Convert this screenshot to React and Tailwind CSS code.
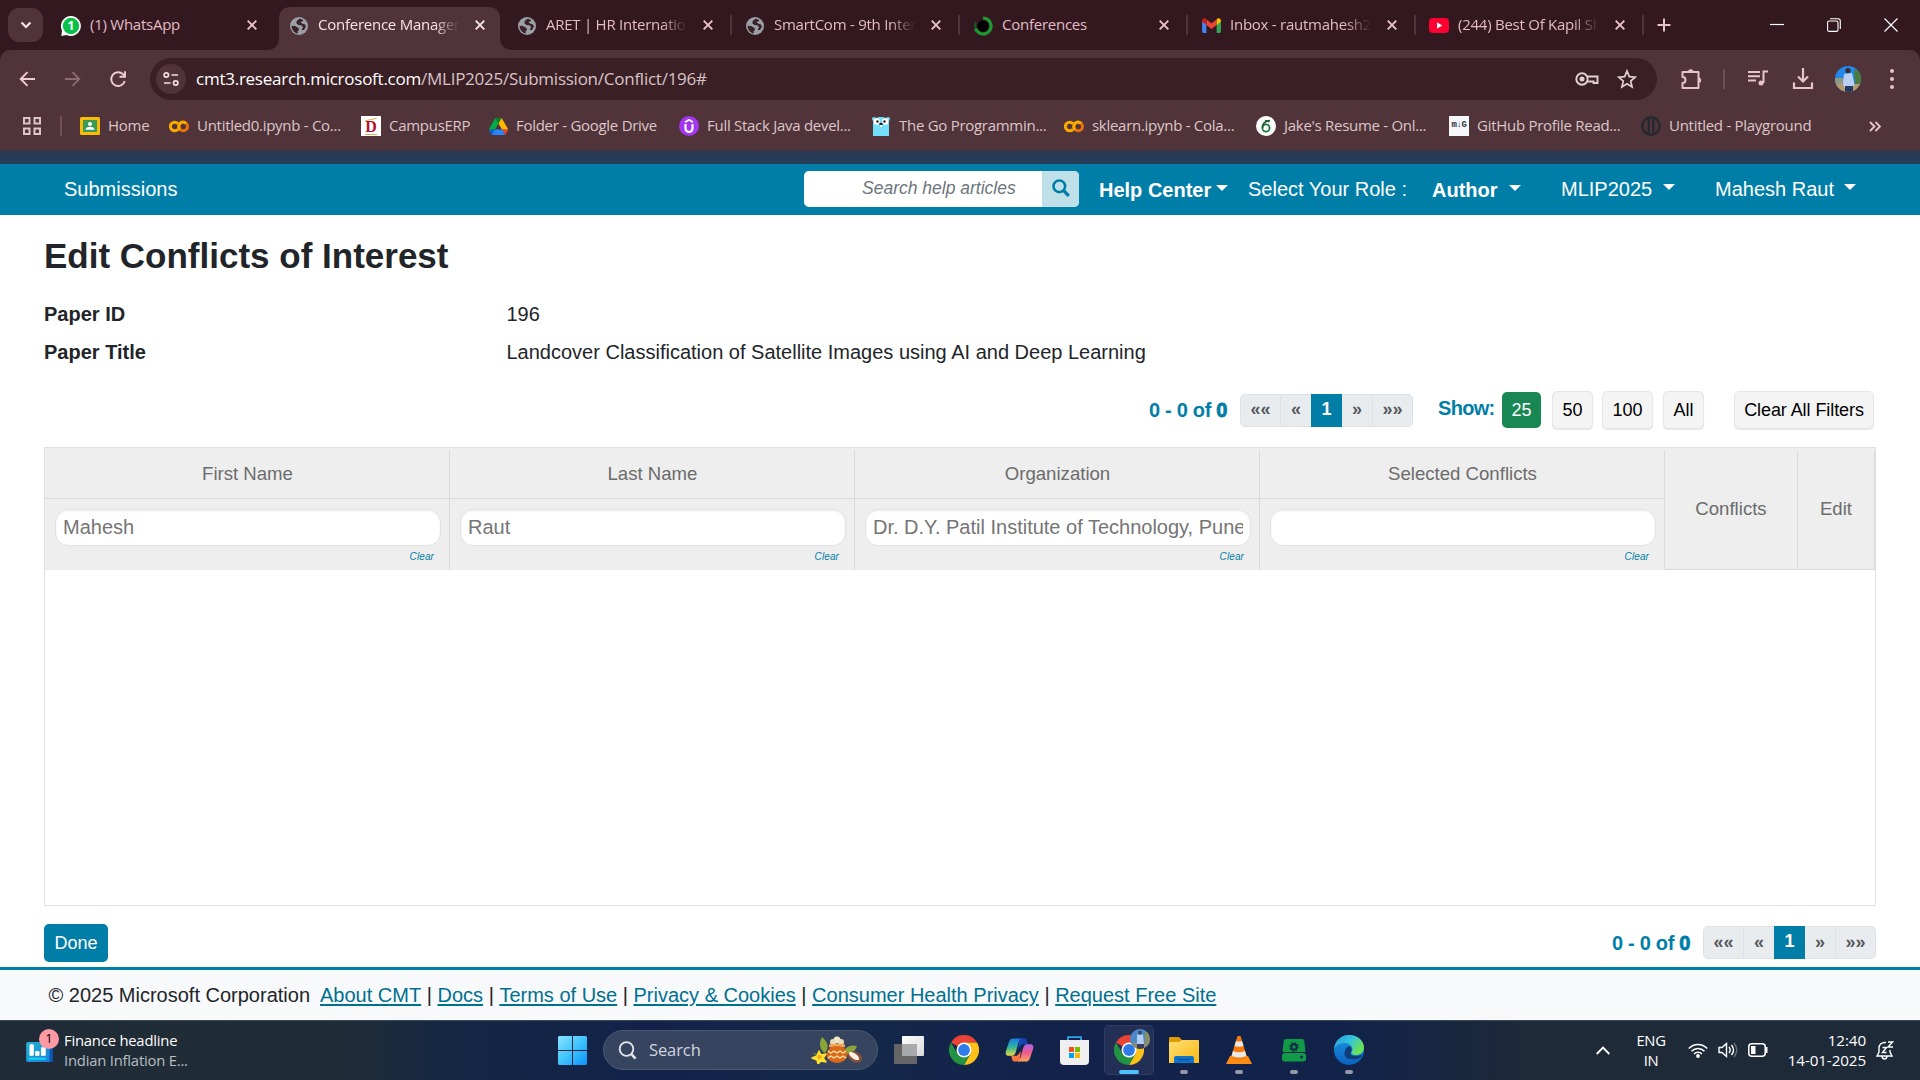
import React from "react";

const seg = "font-['Open_Sans','Noto_Sans',sans-serif]";

function Globe() {
  return (
    <svg viewBox="0 0 18 18" className="h-[18px] w-[18px]">
      <circle cx="9" cy="9" r="9" fill="#9aa0a6" />
      <path d="M9.500 1.800C7.500 3 6 4.500 6.500 6.500L8.500 8l3.500.5 1 2-1.500 2.500h2.500l2-3.500-1-2-3-1-1.500-1.500 2.500-1V2.800ZM1.600 8.800 5 9l3.500 2 .5 2-1.500 1.500.5 2C4.500 16.200 1.600 13 1.600 8.800Z" fill="#3a2227" />
    </svg>
  );
}

function WhatsApp() {
  return (
    <svg viewBox="0 0 20 20" className="h-[20px] w-[20px]">
      <path d="M10 0a10 10 0 1 1-4.500 19L.3 19.900 1 14.500A10 10 0 0 1 10 0Z" fill="#fff" />
      <circle cx="10" cy="10" r="8.200" fill="#0bc04a" />
      <text x="10" y="14.200" textAnchor="middle" fontSize="12" fontWeight="700" fill="#fff" fontFamily="Open Sans">1</text>
    </svg>
  );
}

function Ring() {
  return (
    <svg viewBox="0 0 20 20" className="h-5 w-5">
      <circle cx="10" cy="10" r="5.500" fill="#000" />
      <path d="M10 2a8 8 0 1 1-7.500 10.500" fill="none" stroke="#1f9a33" strokeWidth="3.200" />
      <path d="M2.500 12.500A8 8 0 0 1 3 6" fill="none" stroke="#155a25" strokeWidth="2" />
    </svg>
  );
}

function Gmail() {
  return (
    <svg viewBox="0 0 20 16" className="h-[15px] w-[19px]">
      <path d="M0 3v11.500C0 15.300.700 16 1.500 16H4.500V6Z" fill="#4285f4" />
      <path d="M20 3v11.500c0 .800-.700 1.500-1.500 1.500H15.500V6Z" fill="#34a853" />
      <path d="M4.500 1.500v6L10 11.600l5.500-4.100v-6L10 5.600Z" fill="#ea4335" />
      <path d="M0 2.500C0 .5 2.500-.8 4.500 1v6.500L0 4Z" fill="#c5221f" />
      <path d="M20 2.500c0-2-2.500-3.300-4.500-1.500v6.500L20 4Z" fill="#fbbc04" />
    </svg>
  );
}

function YouTube() {
  return (
    <svg viewBox="0 0 20 15" className="h-[15px] w-[20px]">
      <rect width="20" height="15" rx="4" fill="#ff0033" />
      <path d="M8 4.300v6.400l5.200-3.200Z" fill="#fff" />
    </svg>
  );
}

function Cross({ color = "#e8c3cb" }) {
  return (
    <svg viewBox="0 0 10 10" className="h-[10px] w-[10px]">
      <path d="M.7.7 9.300 9.300M9.300.7.7 9.300" stroke={color} strokeWidth="1.900" />
    </svg>
  );
}

const fade = "[mask-image:linear-gradient(to_right,black_82%,transparent)]";

const tabs = [
  { icon: <WhatsApp />, text: "(1) WhatsApp" },
  { icon: <Globe />, text: "Conference Managem", active: true, long: true },
  { icon: <Globe />, text: "ARET | HR Internation", long: true },
  { icon: <Globe />, text: "SmartCom - 9th Inter", sep: true, long: true },
  { icon: <Ring />, text: "Conferences", sep: true },
  { icon: <Gmail />, text: "Inbox - rautmahesh2", sep: true, long: true },
  { icon: <YouTube />, text: "(244) Best Of Kapil Sh", sep: true, long: true },
];

function Tab({ icon, text, active, sep, long }) {
  return (
    <div className={"relative flex h-[43px] w-[228px] shrink-0 items-center pl-[15px] " + (active ? "text-[#f6e4e8]" : "text-[#e3bcc5]")}>
      {active && (
        <svg viewBox="0 0 246 43" className="absolute -left-[7px] top-0 h-[43px] w-[246px]">
          <path d="M0 43C8 43 12 38 12 31V12C12 4 17 0 24 0H221C229 0 233 4 233 12V31C233 38 238 43 246 43Z" fill="#513439" />
        </svg>
      )}
      {sep && <span className="absolute left-0 top-[8px] h-[20px] w-[2px] bg-[#513439]" />}
      <span className="relative flex w-5 -translate-y-[3px] justify-center">{icon}</span>
      <span className={"relative ml-[9px] w-[141px] -translate-y-[4px] overflow-hidden whitespace-nowrap text-[15px] tracking-[-0.250px] " + (long ? fade : "")}>{text}</span>
      <span className="relative ml-[16px] -translate-y-[4px]"><Cross color={active ? "#f6e4e8" : "#e8c3cb"} /></span>
    </div>
  );
}

function Colab() {
  return (
    <svg viewBox="0 0 20 12" className="h-[13px] w-[20px]" fill="none" strokeWidth="3">
      <path d="M9 3.300A4.300 4.300 0 1 0 9 8.700" stroke="#f9ab00" />
      <circle cx="14.200" cy="6" r="4.300" stroke="#e8710a" />
      <path d="M11 9A4.300 4.300 0 0 1 17 2.800" stroke="#f9ab00" />
    </svg>
  );
}

const bookmarks = [
  {
    w: "w-[89px]", text: "Home",
    icon: (
      <svg viewBox="0 0 20 18" className="h-[18px] w-[20px]">
        <rect width="20" height="18" rx="1.500" fill="#f9bc05" />
        <rect x="3" y="3" width="14" height="12" fill="#3c9a58" />
        <circle cx="10" cy="7" r="2" fill="#fff" />
        <path d="M5.500 12.800c0-4 9-4 9 0Z" fill="#fff" />
      </svg>
    ),
  },
  { w: "w-[192px]", text: "Untitled0.ipynb - Co...", icon: <Colab /> },
  {
    w: "w-[127px]", text: "CampusERP",
    icon: (
      <span className="relative flex h-5 w-5 items-center justify-center bg-white font-['Liberation_Serif',serif] text-[16px] font-bold leading-none text-[#b3122a]">
        <span className="translate-y-[1px]">D</span>
        <span className="absolute left-[4px] top-[3px] h-[1px] w-[12px] -rotate-12 bg-[#d8b15a]" />
        <span className="absolute bottom-[1px] left-[4px] h-[1px] w-[12px] bg-[#d8b15a]" />
      </span>
    ),
  },
  {
    w: "w-[191px]", text: "Folder - Google Drive",
    icon: (
      <svg viewBox="0 0 87.300 78" className="h-[17px] w-[19px]">
        <path d="m6.600 66.850 3.850 6.650c.8 1.400 1.950 2.500 3.300 3.300l13.750-23.800h-27.500c0 1.550.4 3.100 1.200 4.500z" fill="#0066da" />
        <path d="m43.650 25-13.750-23.800c-1.350.8-2.500 1.900-3.300 3.300l-25.400 44a9.060 9.060 0 0 0 -1.200 4.500h27.500z" fill="#00ac47" />
        <path d="m73.550 76.800c1.350-.8 2.500-1.900 3.300-3.300l1.600-2.750 7.650-13.250c.8-1.400 1.200-2.950 1.200-4.500h-27.500l5.850 11.500z" fill="#ea4335" />
        <path d="m43.650 25 13.750-23.800c-1.350-.8-2.900-1.200-4.500-1.200h-18.500c-1.600 0-3.150.45-4.500 1.200z" fill="#00832d" />
        <path d="m59.800 53h-32.300l-13.750 23.800c1.350.8 2.900 1.200 4.500 1.200h50.800c1.600 0 3.150-.45 4.500-1.200z" fill="#2684fc" />
        <path d="m73.400 26.500-12.700-22c-.8-1.400-1.950-2.500-3.300-3.300l-13.750 23.800 16.150 28h27.450c0-1.550-.4-3.100-1.200-4.500z" fill="#ffba00" />
      </svg>
    ),
  },
  {
    w: "w-[192px]", text: "Full Stack Java devel...",
    icon: (
      <svg viewBox="0 0 20 20" className="h-5 w-5" fill="none" stroke="#fff">
        <circle cx="10" cy="10" r="10" fill="#a435f0" stroke="none" />
        <path d="M6.500 8v4.500a3.500 3.500 0 0 0 7 0V8" strokeWidth="2.200" />
        <path d="M6 6.200 10 3.800l4 2.400" strokeWidth="1.800" />
      </svg>
    ),
  },
  {
    w: "w-[193px]", text: "The Go Programmin...",
    icon: (
      <svg viewBox="0 0 20 20" className="h-5 w-5">
        <path d="M2 20V8C2 3 5 1 10 1s8 2 8 7v12Z" fill="#74dffc" />
        <circle cx="3" cy="3" r="2" fill="#74dffc" /><circle cx="17" cy="3" r="2" fill="#74dffc" />
        <circle cx="5.700" cy="5.500" r="3.200" fill="#fff" /><circle cx="14.300" cy="5.500" r="3.200" fill="#fff" />
        <circle cx="6.500" cy="5.500" r="1.200" fill="#222" /><circle cx="13.500" cy="5.500" r="1.200" fill="#222" />
        <ellipse cx="10" cy="8" rx="1.800" ry="1.200" fill="#222" /><path d="M9 9h2v2H9z" fill="#fff" />
      </svg>
    ),
  },
  { w: "w-[192px]", text: "sklearn.ipynb - Cola...", icon: <Colab /> },
  {
    w: "w-[193px]", text: "Jake's Resume - Onl...",
    icon: (
      <svg viewBox="0 0 20 20" className="h-5 w-5">
        <circle cx="10" cy="10" r="10" fill="#fff" />
        <circle cx="10" cy="12" r="3.600" fill="none" stroke="#1b7a34" strokeWidth="1.800" />
        <path d="M6.500 12C6 8 9 5 14 4.500M9 4.500l4.500 1.300" fill="none" stroke="#1c5c33" strokeWidth="1.600" />
      </svg>
    ),
  },
  {
    w: "w-[192px]", text: "GitHub Profile Read...",
    icon: <span className="flex h-5 w-5 items-center justify-center bg-[#f5f7fb] font-['Liberation_Mono',monospace] text-[9px] font-bold tracking-[-0.400px] text-[#2b3137]">m↓G</span>,
  },
  {
    w: "w-[190px]", text: "Untitled - Playground",
    icon: (
      <svg viewBox="0 0 20 20" className="h-5 w-5" stroke="#24292e" fill="none">
        <circle cx="10" cy="10" r="8.700" strokeWidth="2.600" />
        <path d="M7.700 2v16M12.300 2v16" strokeWidth="2.200" />
      </svg>
    ),
  },
];

function Browser() {
  return (
    <header className={"flex h-[151px] flex-col bg-[#331820] " + seg}>
      <div className="flex h-[50px] shrink-0 items-end">
        <div className="mb-[8px] ml-[8px] flex h-[34px] w-[35px] items-center justify-center rounded-[11px] bg-[#513439]">
          <svg viewBox="0 0 12 8" className="h-[8px] w-[12px]"><path d="m1.500 1.500 4.500 4.500 4.500-4.500" fill="none" stroke="#f6e4e8" strokeWidth="2.200" /></svg>
        </div>
        <div className="ml-[3px] flex">
          {tabs.map((t, i) => <Tab key={i} {...t} />)}
          <div className="relative flex h-[43px] w-[40px] items-center">
            <span className="absolute left-0 top-[8px] h-[20px] w-[2px] bg-[#513439]" />
            <svg viewBox="0 0 14 14" className="ml-[15px] h-[14px] w-[14px] -translate-y-[4px]"><path d="M7 .5v13M.5 7h13" stroke="#e8c3cb" strokeWidth="2" /></svg>
          </div>
        </div>
        <div className="ml-auto mr-[22px] flex h-[50px] items-center gap-[43px]">
          <svg viewBox="0 0 14 14" className="h-[14px] w-[14px]"><path d="M0 6.500h14" stroke="#fff" strokeWidth="1.200" /></svg>
          <svg viewBox="0 0 14 14" className="h-[14px] w-[14px]" fill="none" stroke="#fff" strokeWidth="1.100"><rect x=".6" y="3" width="10.400" height="10.400" rx="1.500" /><path d="M3 .7h8c1.400 0 2.300 1 2.300 2.300v8" /></svg>
          <svg viewBox="0 0 14 14" className="h-[14px] w-[14px]"><path d="m.5.5 13 13M13.500.5l-13 13" stroke="#fff" strokeWidth="1.200" /></svg>
        </div>
      </div>
      <div className="flex h-[58px] shrink-0 items-center rounded-t-[10px] bg-[#513439] pl-[17px] pr-[17px]">
        <svg viewBox="0 0 20 20" className="h-5 w-5" fill="none" stroke="#f0cdd4" strokeWidth="1.900"><path d="M18 10H4M10.500 3.200 3.700 10l6.800 6.800" /></svg>
        <svg viewBox="0 0 20 20" className="ml-[25px] h-5 w-5" fill="none" stroke="#8b6a70" strokeWidth="1.900"><path d="M3 10h14M10.500 3.200l6.800 6.800-6.800 6.800" /></svg>
        <svg viewBox="0 0 20 20" className="ml-[26px] h-5 w-5" fill="none" stroke="#f0cdd4" strokeWidth="1.900"><path d="M16.800 12A6.900 6.900 0 1 1 15 5.200L17 7.500" /><path d="M17 2.300v5.500h-5.500" /></svg>
        <div className="ml-[22px] flex h-[42px] w-[1507px] items-center rounded-full bg-[#3a2025] pl-[6px]">
          <span className="flex h-[30px] w-[30px] items-center justify-center rounded-full bg-[#513439]">
            <svg viewBox="0 0 16 16" className="h-4 w-4" fill="none" stroke="#f1dfe2" strokeWidth="1.700"><circle cx="3.300" cy="4" r="2.200" /><path d="M8.500 4H15M1 12h6.500" /><circle cx="12.700" cy="12" r="2.200" /></svg>
          </span>
          <span className="ml-[10px] whitespace-nowrap text-[17px] tracking-[-0.250px] text-[#d9c3c7]"><span className="text-white">cmt3.research.microsoft.com</span>/MLIP2025/Submission/Conflict/196#</span>
          <svg viewBox="0 0 24 14" className="ml-auto h-[14px] w-[24px]" fill="none" stroke="#e3d0d3" strokeWidth="1.900"><circle cx="7" cy="7" r="5.700" /><circle cx="7" cy="7" r="2.500" fill="#e3d0d3" stroke="none" /><path d="M12.500 4.500H22.500v6.500h-4V9.500h-6" /></svg>
          <svg viewBox="0 0 20 20" className="ml-[18px] mr-[20px] h-5 w-5" fill="none" stroke="#e3d0d3" strokeWidth="1.700"><path d="m10 2 2.300 5.600 6 .5-4.600 4 1.400 5.900-5.100-3.200L4.900 18l1.400-5.900-4.600-4 6-.5Z" /></svg>
        </div>
        <svg viewBox="0 0 22 22" className="ml-[23px] h-[22px] w-[22px]" fill="none" stroke="#e8c3cb" strokeWidth="2"><path d="M2.500 4h16v16h-16v-5c4 0 4-6 0-6Z" strokeLinejoin="round" /><path d="M8 4a2.700 2.700 0 0 1 5.400 0ZM18.500 9.500a2.700 2.700 0 0 1 0 5.400Z" fill="#e8c3cb" stroke="none" /></svg>
        <span className="ml-[21px] h-[20px] w-[2px] bg-[#705056]" />
        <svg viewBox="0 0 20 16" className="ml-[23px] h-[16px] w-[20px] -translate-y-[1px]" fill="none" stroke="#e8c3cb" strokeWidth="2"><path d="M0 2h12M0 6.300h12M0 10.500h8M15.500 13V1.500H20" /><circle cx="13" cy="13" r="2.500" fill="#e8c3cb" stroke="none" /></svg>
        <svg viewBox="0 0 22 22" className="ml-[24px] h-[22px] w-[22px]" fill="none" stroke="#e8c3cb" strokeWidth="2.200"><path d="M11 0v13M6 8.500l5 5 5-5M2 14.500V20h18v-5.500" /></svg>
        <svg viewBox="0 0 26 26" className="ml-[21px] h-[26px] w-[26px]"><defs><clipPath id="av"><circle cx="13" cy="13" r="13" /></clipPath></defs><g clipPath="url(#av)"><path fill="#2488e8" d="M0 0h26v26H0z" /><path fill="#8d9a8a" d="M0 12h10v9H0z" /><path fill="#4c7a3c" d="M19 3l7 4v11h-6z" /><path fill="#b09a6e" d="M0 18h26v8H0z" /><path d="m9 8 8-1 2.500 12-3 3H9.500L8 18Z" fill="#b9cff5" /><path d="M10 20h8v6h-8z" fill="#27375e" /><circle cx="13" cy="4.500" r="2.600" fill="#3b2730" /></g></svg>
        <svg viewBox="0 0 6 22" className="ml-[28px] h-[22px] w-[6px]" fill="#e8c3cb"><circle cx="3" cy="3" r="2" /><circle cx="3" cy="11" r="2" /><circle cx="3" cy="19" r="2" /></svg>
      </div>
      <div className="flex flex-1 items-start bg-[#513439] pl-[23px] text-[15px] text-[#dcc6ca]">
        <div className="flex h-[36px] w-full items-center">
          <svg viewBox="0 0 18 18" className="h-[18px] w-[18px]" fill="none" stroke="#dcc6ca" strokeWidth="2"><path d="M1 1h5.500v5.500H1zM11.500 1H17v5.500h-5.500zM1 11.500h5.500V17H1zM11.500 11.500H17V17h-5.500z" /></svg>
          <span className="ml-[19px] h-[20px] w-[2px] bg-[#705056]" />
          <div className="ml-[18px] flex">
            {bookmarks.map((b) => (
              <span key={b.text} className={"flex items-center whitespace-nowrap tracking-[-0.280px] " + b.w}>
                <span className="mr-[8px] flex w-5 shrink-0 justify-center">{b.icon}</span><span className="-translate-y-[1px]">{b.text}</span>
              </span>
            ))}
          </div>
          <svg viewBox="0 0 12 10" className="ml-[38px] h-[11px] w-[12px]" fill="none" stroke="#e8c3cb" strokeWidth="1.900"><path d="m1 .5 4.500 4.500L1 9.500M6.500.5 11 5 6.500 9.500" /></svg>
        </div>
      </div>
    </header>
  );
}

function Caret({ className }) {
  return <svg viewBox="0 0 12 6" className={"h-[6px] w-[12px] " + className}><path d="M0 0h12L6 6Z" fill="#fff" /></svg>;
}

function Pager() {
  const cell = "flex items-center justify-center border-[#dee2e6] bg-[#e9ecef] text-[#55595c] pb-[1px]";
  return (
    <div className="flex items-center">
      <span className="mr-[13px] w-[78px] whitespace-nowrap text-[20px] font-bold tracking-[-0.300px] text-[#007ea7]">0 - 0 of <span className="[-webkit-text-stroke:0.800px_#007ea7]">0</span></span>
      <div className="flex h-[33px] text-[18px] font-bold">
        <span className={cell + " w-[41px] rounded-l-[5px] border"}>««</span>
        <span className={cell + " w-[30px] border-y"}>«</span>
        <span className="flex w-[31px] items-center justify-center bg-[#007ea7] pb-[2px] text-white">1</span>
        <span className={cell + " w-[31px] border-y border-r"}>»</span>
        <span className={cell + " w-[40px] rounded-r-[5px] border-y border-r"}>»»</span>
      </div>
    </div>
  );
}

function SizeButton({ children, className }) {
  return <span className={"flex h-[38px] items-center justify-center rounded-[5px] border border-[#e6e6e6] bg-[#f4f4f4] text-[18px] text-black shadow-[0_1px_1px_rgba(0,0,0,0.100)] " + className}>{children}</span>;
}

const columns = [
  ["First Name", "Mahesh"],
  ["Last Name", "Raut"],
  ["Organization", "Dr. D.Y. Patil Institute of Technology, Pune"],
  ["Selected Conflicts", ""],
];

function Page() {
  return (
    <main className="flex h-[869px] flex-col bg-white font-['Liberation_Sans',Arial,sans-serif] text-[20px] text-[#212529]">
      <div className="h-[13px] shrink-0 bg-[#263c58]" />
      <nav className="flex h-[51px] shrink-0 items-center bg-[#007ea7] pb-[2px] pl-[64px] text-white">
        <span className="w-[740px]">Submissions</span>
        <div className="flex h-[36px] w-[275px] overflow-hidden rounded-[5px] bg-white">
          <span className="flex w-[238px] items-center pl-[58px] text-[17.500px] italic text-[#6c757d]">Search help articles</span>
          <span className="flex w-[37px] items-center justify-center bg-[#bfdfe9]">
            <svg viewBox="0 0 18 18" className="h-[18px] w-[18px] -translate-y-[1px]" fill="none" stroke="#007ea7"><circle cx="7.300" cy="7.300" r="5.800" strokeWidth="2.600" /><path d="m11.500 11.500 5.300 5.300" strokeWidth="3.200" /></svg>
          </span>
        </div>
        <span className="ml-[20px] w-[117px] translate-y-[1px] whitespace-nowrap font-bold">Help Center</span><Caret className="-translate-y-[1px]" />
        <span className="ml-[20px] w-[184px] whitespace-nowrap">Select Your Role :</span>
        <span className="w-[77px] translate-y-[1px] font-bold">Author</span><Caret className="-translate-y-[1px]" />
        <span className="ml-[40px] w-[102px]">MLIP2025</span><Caret className="-translate-y-[2px]" />
        <span className="ml-[40px] w-[129px] whitespace-nowrap">Mahesh Raut</span><Caret className="-translate-y-[2px]" />
      </nav>
      <section className="flex flex-1 flex-col px-[44px]">
        <h1 className="mt-[19px] text-[35px] font-bold leading-[44px]">Edit Conflicts of Interest</h1>
        <div className="mt-[21px] grid grid-cols-[462.5px_1fr] gap-y-[8px] leading-[30px]">
          <b>Paper ID</b><span>196</span>
          <b>Paper Title</b><span>Landcover Classification of Satellite Images using AI and Deep Learning</span>
        </div>
        <div className="mt-[24px] flex h-[38px] items-center justify-end pr-[2px]">
          <Pager />
          <span className="ml-[25px] w-[64px] pb-[4px] text-[20px] font-bold tracking-[-0.700px] text-[#007ea7]">Show:</span>
          <span className="flex h-[36px] w-[39px] items-center justify-center rounded-[5px] bg-[#198754] text-[18px] text-white">25</span>
          <SizeButton className="ml-[11px] w-[41px]">50</SizeButton>
          <SizeButton className="ml-[9px] w-[51px]">100</SizeButton>
          <SizeButton className="ml-[10px] w-[41px]">All</SizeButton>
          <SizeButton className="ml-[30px] w-[140px] whitespace-nowrap tracking-[-0.080px]">Clear All Filters</SizeButton>
        </div>
        <div className="mt-[18px] h-[459px] border border-[#dee2e6]">
          <div className="flex h-[122px] bg-[#eeeeee] pt-[2px] text-[18.600px] text-[#6c6c6c]">
            {columns.map(([name, value]) => (
              <div key={name} className="flex w-[405px] flex-col border-r border-[#dadada]">
                <div className="flex h-[49px] items-center justify-center border-b border-[#dadada] pb-[1px] pl-[1px]">{name}</div>
                <div className="flex flex-col items-end pl-[10px] pr-[8px] pt-[10px]">
                  <div className="flex h-[37px] w-full items-center overflow-hidden rounded-[13px] border border-[#dfe3e7] bg-white px-[7px] pb-[2px] text-[20px] text-[#757575] shadow-[inset_0_1px_2px_rgba(0,0,0,0.080)]">
                    <span className="flex-1 overflow-hidden whitespace-nowrap">{value}</span>
                  </div>
                  <span className="mr-[7px] mt-[4px] text-[10px] italic leading-[13px] tracking-[0.100px] text-[#007ea7]">Clear</span>
                </div>
              </div>
            ))}
            <div className="flex w-[133px] items-center justify-center border-b border-r border-[#dadada] pb-[1px]">Conflicts</div>
            <div className="flex flex-1 items-center justify-center border-b border-r border-[#dadada] pb-[1px]">Edit</div>
          </div>
        </div>
        <div className="mt-[18px] flex items-start justify-between">
          <span className="flex h-[38px] w-[64px] items-center justify-center rounded-[5px] bg-[#007ea7] text-[18px] text-white">Done</span>
          <div className="mt-[2px]"><Pager /></div>
        </div>
      </section>
      <footer className="flex h-[53px] shrink-0 items-center whitespace-pre border-t-[3px] border-[#007ea7] bg-[#f8f9fb] pl-[48.5px]">
        <span className="mr-[10px]">© 2025 Microsoft Corporation</span>
        {["About CMT", "Docs", "Terms of Use", "Privacy & Cookies", "Consumer Health Privacy", "Request Free Site"].map((t, i) => (
          <React.Fragment key={t}>{i > 0 && <span> | </span>}<a className="text-[#00708f] underline underline-offset-[2px]">{t}</a></React.Fragment>
        ))}
      </footer>
    </main>
  );
}

function Chrome() {
  return (
    <svg viewBox="0 0 30 30" className="h-[30px] w-[30px]">
      <path d="M15 15 2 7.500A15 15 0 0 1 28 7.500H15Z" fill="#ea4335" />
      <path d="M28 7.500A15 15 0 0 1 15 30L21.500 18.500 15 7.500Z" fill="#fbc116" />
      <path d="M15 30A15 15 0 0 1 2 7.500L8.500 18.700 21.500 18.700Z" fill="#229342" />
      <circle cx="15" cy="15" r="7.500" fill="#fff" /><circle cx="15" cy="15" r="5.900" fill="#2f7bea" />
    </svg>
  );
}

function Copilot() {
  return (
    <svg viewBox="0 0 30 26" className="h-[26px] w-[29px]">
      <defs>
        <linearGradient id="ca" x1="0" y1="0" x2="0" y2="1"><stop offset="0" stopColor="#1b78e6" /><stop offset=".5" stopColor="#2fb59c" /><stop offset="1" stopColor="#e8d840" /></linearGradient>
        <linearGradient id="cb" x1="0" y1="0" x2="0" y2="1"><stop offset="0" stopColor="#b065e8" /><stop offset=".5" stopColor="#f0598c" /><stop offset="1" stopColor="#fba85a" /></linearGradient>
      </defs>
      <path d="M15 1h5c2.500 0 2.500 2 3.500 6h-6l-4 5Z" fill="#1447b5" />
      <path d="M15 25h-5c-2.500 0-2.500-2-3.500-6h6l4-5Z" fill="#f7763d" />
      <path d="M18 1c-2 0-3 1-4 4l-2.500 9c-.8 3-2 5-4.500 5H4c-3 0-4-2-3-5L4 5c1-3 2-4 5-4Z" fill="url(#ca)" />
      <path d="M12 25c2 0 3-1 4-4l2.500-9c.8-3 2-5 4.500-5h3c3 0 4 2 3 5l-3 9c-1 3-2 4-5 4Z" fill="url(#cb)" />
    </svg>
  );
}

function TaskIcon({ children, open, current }) {
  return (
    <div className={"relative flex h-[50px] w-[50px] items-center justify-center " + (current ? "rounded-[5px] border border-[#303c62] bg-[#242f56]" : "")}>
      {children}
      {open && <span className={"absolute h-[4px] rounded-full " + (current ? "bottom-0 w-[20px] bg-[#4cc2ff]" : "bottom-[1px] w-[8px] bg-[#9499aa]")} />}
    </div>
  );
}

function Taskbar() {
  return (
    <footer className={"flex h-[60px] items-center border-t border-[#3d4956] bg-[linear-gradient(90deg,#1f2b36_0%,#202c35_17%,#142744_24%,#12224a_34%,#142949_43%,#12224b_55%,#12234a_70%,#1e2a38_80%,#1e2a37_100%)] pb-[1px] text-white " + seg}>
      <div className="flex w-[558px] items-center pl-[26px]">
        <div className="relative h-[36px] w-[34px]">
          <svg viewBox="0 0 28 22" className="absolute left-0 top-[10px] h-[21px] w-[27px]"><defs><linearGradient id="fi" x2="1" y2="1"><stop stopColor="#20b4cf" /><stop offset="1" stopColor="#1d7ddc" /></linearGradient></defs><rect x="4" y="1" width="24" height="20" rx="2" fill="#0c56b6" /><rect width="24.500" height="21" rx="2" fill="url(#fi)" /><path d="M4 3h3.500v11H4zM10 10h3.500v4H10zM16 6h4v8h-4z" fill="#fff" stroke="#fff" /><path d="M3 17.500h18" stroke="#11dcf6" strokeWidth="2" /></svg>
          <span className="absolute left-[13px] top-[-3px] flex h-5 w-5 items-center justify-center rounded-full bg-[#ff99a4] text-[13px] text-black">1</span>
        </div>
        <div className="ml-[4px] flex flex-col text-[14.800px] leading-[20px] tracking-[-0.200px]"><span>Finance headline</span><span className="text-[#b9bec3]">Indian Inflation E...</span></div>
      </div>
      <svg viewBox="0 0 29 29" className="h-[29px] w-[29px]"><defs><linearGradient id="wn" x2="1" y2="1"><stop stopColor="#8ae4ff" /><stop offset=".5" stopColor="#3fc4fc" /><stop offset="1" stopColor="#0a93f8" /></linearGradient></defs><path d="M1 0h13v14H0V1ZM15 0h13l1 1v13H15ZM0 15h14v14H1l-1-1ZM15 15h14v13l-1 1H15Z" fill="url(#wn)" /></svg>
      <div className="ml-[16px] flex h-[40px] w-[275px] items-center rounded-full border border-[#4a5875] bg-[#36445f] pl-[14px] text-[16.500px] tracking-[-0.100px] text-[#cfd5df]">
        <svg viewBox="0 0 19 19" className="h-[19px] w-[19px]" fill="none" stroke="#e3e6ec"><circle cx="8.500" cy="8" r="6.800" strokeWidth="1.800" /><path d="m13.300 13 4.200 4.700" strokeWidth="2.600" /></svg>
        <span className="ml-[12px]">Search</span>
        <svg viewBox="0 0 52 28" className="ml-auto mr-[15px] h-[28px] w-[52px]">
          <path d="M12 1c7 6 7 11 3 16-6-4-6-10-3-16ZM47 10c-8-2-13 2-14 8 7 1 12-2 14-8Z" fill="#8aa638" /><path d="M2 17l14 2-2 4Z" fill="#7a9632" />
          <circle cx="27" cy="4" r="3.500" fill="#f3e8c8" /><circle cx="23" cy="6" r="3" fill="#eadcb5" /><circle cx="31" cy="6" r="3" fill="#eadcb5" />
          <rect x="19" y="8" width="16" height="3.500" rx="1.500" fill="#f4a455" /><ellipse cx="27" cy="18.500" rx="10.500" ry="8.500" fill="#d9691a" />
          <path d="m18 15 3 2 3-2 3 2 3-2 3 2 3-2M18 22l3-2 3 2 3-2 3 2 3-2 3 2" fill="none" stroke="#ffe9aa" strokeWidth="1.200" />
          <ellipse cx="45" cy="21" rx="7.500" ry="5" transform="rotate(28 45 21)" fill="#87503b" /><ellipse cx="44" cy="20" rx="6" ry="2.600" transform="rotate(35 44 20)" fill="#fff3e6" />
          <path d="m9 15 2 4 5-1-3 4 3 4-5-1-3 3-1-4-5-2 5-2Z" fill="#ffe02d" stroke="#ffe02d" strokeWidth="1.500" strokeLinejoin="round" /><circle cx="9.500" cy="21" r="2" fill="#f2a31a" />
        </svg>
      </div>
      <div className="ml-[6px] flex gap-[5px]">
        <TaskIcon><svg viewBox="0 0 30 28" className="h-[28px] w-[30px]"><defs><linearGradient id="tv" x2="1" y2="1"><stop stopColor="#fff" /><stop offset="1" stopColor="#d9d9d9" /></linearGradient></defs><rect y="8" width="23" height="20" rx="1" fill="#656565" /><rect x="8" width="22" height="20" rx="1" fill="url(#tv)" /><path d="M8 8h15v12H8z" fill="#a7a9ab" /></svg></TaskIcon>
        <TaskIcon><Chrome /></TaskIcon>
        <TaskIcon><Copilot /></TaskIcon>
        <TaskIcon><svg viewBox="0 0 29 29" className="h-[29px] w-[29px]"><path d="M8 5V1.200h13V5" fill="none" stroke="#28a8ea" strokeWidth="1.800" /><path d="M0 4h29v21q0 4-4 4H4q-4 0-4-4Z" fill="#efefef" /><path d="M9 11h5v5H9z" fill="#f25022" /><path d="M15 11h5v5h-5z" fill="#7fba00" /><path d="M9 17h5v5H9z" fill="#00a4ef" /><path d="M15 17h5v5h-5z" fill="#ffb900" /></svg></TaskIcon>
        <TaskIcon open current><Chrome /><svg viewBox="0 0 20 20" className="absolute right-[3px] top-[3px] h-5 w-5"><defs><clipPath id="ap"><circle cx="10" cy="10" r="10" /></clipPath></defs><g clipPath="url(#ap)"><path fill="#4b88c8" d="M0 0h20v20H0z" /><path fill="#8a8f5c" d="M15 3h5v11h-5z" /><path fill="#8f8a72" d="M0 14h20v6H0z" /><path fill="#b5cdf5" d="M7 5.500h6l1 9.500H7z" /><path fill="#35415b" d="M7 15h7v5H7zM8.500 2h3v3.500h-3z" /></g></svg></TaskIcon>
        <TaskIcon open><svg viewBox="0 0 30 26" className="h-[26px] w-[30px]"><defs><linearGradient id="fd" x2="1" y2="1"><stop stopColor="#ffdf72" /><stop offset="1" stopColor="#fbb915" /></linearGradient></defs><path d="M0 1q0-1 1-1h9l3 3v4H0Z" fill="#dd9c06" /><path d="M0 6q0-1 1-1h9l3-2h16q1 0 1 1v22H0Z" fill="url(#fd)" /><path d="M5 26v-5q0-2 2-2h16q2 0 2 2v5Z" fill="#0f73c9" /><path d="M9 22.500h12" stroke="#084b92" strokeWidth="1.200" /></svg></TaskIcon>
        <TaskIcon open><svg viewBox="0 0 26 28" className="h-[28px] w-[26px]"><path d="M4 20h18l4 8H0Z" fill="#ff8b12" /><path d="m11.500 0h3L21 21q-8 5-16 0Z" fill="#f47b0b" /><path d="m10 5-1.500 5q4.500 1.600 9 0L16 5q-3 1-6 0ZM7 15l-1.400 5q7.400 3 14.800 0L19 15q-6 2.500-12 0Z" fill="#e9e9e9" /></svg></TaskIcon>
        <TaskIcon open><svg viewBox="0 0 24 23" className="h-[23px] w-[24px]"><path d="M4 0h16q2 0 2.300 2L23.500 13H.5L1.700 2Q2 0 4 0Z" fill="#119b47" /><rect y="14" width="24" height="8.500" rx="3" fill="#119b47" /><circle cx="12" cy="8" r="2.700" fill="none" stroke="#14294a" strokeWidth="2" /><circle cx="12" cy="8" r="4.200" fill="none" stroke="#14294a" strokeWidth="1.200" strokeDasharray="1.650 1.650" /><circle cx="19.500" cy="18" r="1.500" fill="#14294a" /></svg></TaskIcon>
        <TaskIcon open><svg viewBox="0 0 30 30" className="h-[30px] w-[30px]"><defs><linearGradient id="ea" x2="1" y2=".5"><stop stopColor="#269be0" /><stop offset=".55" stopColor="#35c3dd" /><stop offset="1" stopColor="#6be34e" /></linearGradient><linearGradient id="eb" x2="0" y2="1"><stop stopColor="#1995e2" /><stop offset="1" stopColor="#0c62bf" /></linearGradient></defs><circle cx="15" cy="15" r="15" fill="url(#eb)" /><path d="M0 14C1 5 8 0 15 0c9 0 15 6 15 12.500 0 5-4 7.500-8 7.500-4 0-5.500-1.500-4.500-3 1-1.400 1.200-2.500.8-4C17 9 13 7.500 9 8 5 8.500 1.500 11 0 14Z" fill="url(#ea)" /><path d="M10.500 19c0-5 3-8 5-8 2 1 3 4 1.500 6-1.500 3 2 4.500 6 4 3-.3 5-1 5.500-.5-3 5-18 6-18-1.500Z" fill="#103d79" /></svg></TaskIcon>
      </div>
      <div className="ml-auto flex items-center pr-[26px] text-[15px] leading-[20px]">
        <svg viewBox="0 0 14 9" className="h-[9px] w-[14px]" fill="none" stroke="#fff" strokeWidth="1.800"><path d="m.7 8 6.300-6.500L13.300 8" /></svg>
        <div className="ml-[26px] flex w-[30px] flex-col items-center text-[14.800px] tracking-[-0.300px]"><span>ENG</span><span>IN</span></div>
        <svg viewBox="0 0 20 16" className="ml-[22px] h-[16px] w-[20px]" fill="none" stroke="#fff" strokeWidth="1.500"><path d="M.8 6.500a12.500 12.500 0 0 1 18.400 0M3.500 9.200a9 9 0 0 1 13 0M6 11.900a5.500 5.500 0 0 1 8 0" /><circle cx="10" cy="14" r="1.900" fill="#fff" stroke="none" /></svg>
        <svg viewBox="0 0 20 16" className="ml-[10px] h-[16px] w-[20px]" fill="none" stroke="#fff" strokeWidth="1.400"><path d="M1 5.500h3L8.500 1.500v13L4 10.500H1ZM11 5q2.400 3 0 6M13.500 3q4 5 0 10" /><path d="M16 1q5.500 7 0 14" stroke="#66717c" /></svg>
        <svg viewBox="0 0 20 14" className="ml-[10px] h-[14px] w-[20px]" fill="none" stroke="#fff" strokeWidth="1.500"><rect x=".8" y=".8" width="16.400" height="12.400" rx="3" /><path d="M3 3h4.500v8H3z" fill="#fff" stroke="none" /><path d="M17.500 5h1v4h-1" strokeWidth="2" /></svg>
        <div className="ml-[20px] flex w-[78px] flex-col items-end whitespace-nowrap text-[15.200px] tracking-[-0.100px]"><span>12:40</span><span>14-01-2025</span></div>
        <svg viewBox="0 0 18 19" className="ml-[10px] h-[19px] w-[18px]" fill="none" stroke="#fff" strokeWidth="1.400"><path d="M10 1.500C5 1 3 4 3 7v4l-2 4h15l-2-4V9M6 15.500q.5 2.500 2.500 2.500t2.500-2.500M12 1h4.500L12 6h5M6.500 6.500h4l-4 5h4" /></svg>
      </div>
    </footer>
  );
}

export default function App() {
  return (
    <div className="h-[1080px] w-[1920px] overflow-hidden">
      <Browser />
      <Page />
      <Taskbar />
    </div>
  );
}
